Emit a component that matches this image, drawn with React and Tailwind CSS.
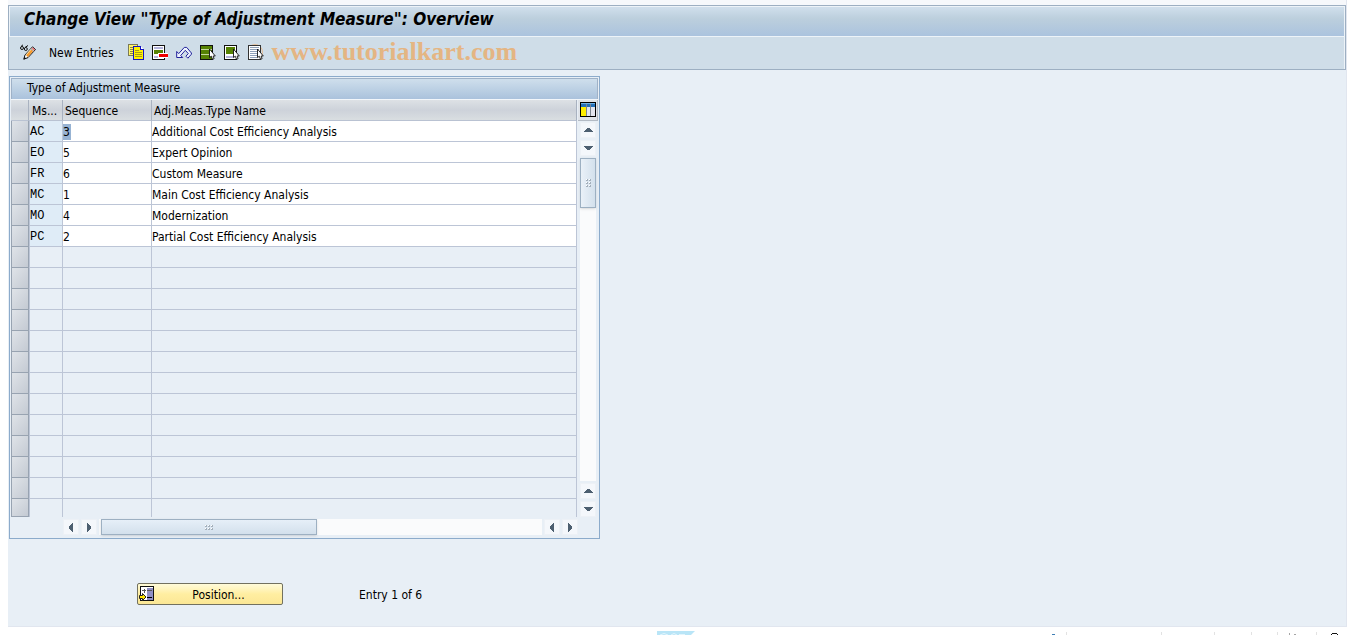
import clsx from "clsx";

const measures = [
  { code: "AC", sequence: "3", name: "Additional Cost Efficiency Analysis" },
  { code: "EO", sequence: "5", name: "Expert Opinion" },
  { code: "FR", sequence: "6", name: "Custom Measure" },
  { code: "MC", sequence: "1", name: "Main Cost Efficiency Analysis" },
  { code: "MO", sequence: "4", name: "Modernization" },
  { code: "PC", sequence: "2", name: "Partial Cost Efficiency Analysis" },
];

const VISIBLE_ROWS = 19;

function Icon({ children }) {
  return (
    <svg
      width="16"
      height="16"
      viewBox="0 0 16 16"
      shapeRendering="crispEdges"
      fill="none"
      aria-hidden="true"
    >
      {children}
    </svg>
  );
}

function DisplayChangeIcon() {
  return (
    <Icon>
      <g shapeRendering="auto">
        <circle cx="2" cy="4" r="1.5" stroke="#111" />
        <circle cx="5.8" cy="5" r="1.5" stroke="#111" />
        <path d="M1 2.5 3 .8M5 3.5 8 1.5" stroke="#111" />
        <path d="M3.8 15.2 5 11 12.5 2.8 15.5 5.5 8 13.6z" fill="#fff" stroke="#111" />
        <path d="M5.8 11 11.6 4.6l2.2 2-5.9 6.4z" fill="#f79a2c" />
        <path d="M6 10.8 11.8 4.6" stroke="#ffe9b0" />
        <path d="M11.8 4.2 12.7 3.4 15 5.5l-.9 1z" fill="#e8636a" />
        <path d="M11 4.8 13.6 7.2" stroke="#8faee0" />
        <path d="M3.6 15.4 4.4 12.8 6.2 14.5z" fill="#111" />
      </g>
    </Icon>
  );
}

function CopyIcon() {
  return (
    <Icon>
      <path d="M.5.5h9v11h-9z" fill="#fff36b" stroke="#7b7a55" />
      <path d="M2 3.5h6M2 5.5h3M2 7.5h3M2 9.5h3" stroke="#8d8a3c" />
      <path d="M5.5 2.5h7l3 3v10h-10z" fill="#fff100" stroke="#1515c0" />
      <path d="M12.5 2.5v3h3" fill="#fff" stroke="#1515c0" />
      <path d="M7 6.5h4M7 8.5h7M7 10.5h7M7 12.5h7" stroke="#a39a1e" />
    </Icon>
  );
}

function DeleteIcon() {
  return (
    <Icon>
      <path d="M.5 1.5h12v14H.5z" fill="#fff" stroke="#111" />
      <path d="M2 3h9v2H2zM2 12h9v2H2z" fill="#b4b4dc" />
      <path d="M2 6h9v4H2z" fill="#568203" />
      <path d="M6 9h10v5H6z" fill="#fff" />
      <path d="M7 10h9v3H7z" fill="#f00000" />
    </Icon>
  );
}

function UndoIcon() {
  return (
    <Icon>
      <path
        d="M.7 7.5v6h6l-2-2 4.6-5.2 3 3.3-2.4 2.6 2 2 3.5-4V9l-4.7-5.6H8.3L2.7 9.6z"
        fill="#eef4ff"
        stroke="#20209a"
        shapeRendering="auto"
      />
    </Icon>
  );
}

function Pointer() {
  return (
    <path
      d="M9.5 5v8.6l1.8-1.4 1.2 3.1 1.6-.6-1-2.7h2.2z"
      fill="#fff"
      stroke="#111"
      strokeWidth="0.9"
      shapeRendering="auto"
    />
  );
}

function SelectAllIcon() {
  return (
    <Icon>
      <path d="M.5 1.5h12v14H.5z" fill="#fff" stroke="#111" />
      <path d="M1 2h11v3H1zM1 6h11v4H1zM1 11h11v4H1z" fill="#568203" />
      <path d="M1 5.5h11M1 10.5h11" stroke="#c4d99a" />
      <Pointer />
    </Icon>
  );
}

function SelectBlockIcon() {
  return (
    <Icon>
      <path d="M.5 1.5h12v14H.5z" fill="#fff" stroke="#111" />
      <path d="M2 3h9v7H2z" fill="#568203" />
      <path d="M2 12h7v2H2z" fill="#b4b4dc" />
      <Pointer />
    </Icon>
  );
}

function DeselectAllIcon() {
  return (
    <Icon>
      <circle cx="7" cy="8" r="7.5" stroke="#e5bf9a" shapeRendering="auto" />
      <path d="M.5 1.5h12v14H.5z" fill="#fff" stroke="#333" />
      <path d="M2 3.5h9M2 5.5h9M2 7.5h7M2 9.5h7M2 11.5h7M2 13.5h7" stroke="#8fa0b8" />
      <Pointer />
    </Icon>
  );
}

function ColumnsIcon() {
  return (
    <Icon>
      <path d="M.5.5h15v14H.5z" fill="#fff" stroke="#000" />
      <path d="M1 1h14v4H1z" fill="#2470b8" />
      <path d="M1 1h14v1H1z" fill="#6fb0e4" />
      <path d="M1 5h5v9H1z" fill="#ffee00" />
      <path d="M7 5h3v9H7zM11 5h4v9h-4z" fill="#e3e5ee" />
      <path d="M6.5 2v12M10.5 2v12" stroke="#7c848f" />
    </Icon>
  );
}

function PositionIcon() {
  return (
    <Icon>
      <path d="M1.5.5h13v14h-13z" fill="#fff" stroke="#111" />
      <path d="M8 2h6v12H8z" fill="#8f8fc4" />
      <path d="M3 4.5h4M5.5 2.5v4M8 4.5h5" stroke="#555" />
      <path d="M8 11.5h5" stroke="#000" />
      <path
        d="M.5 9.5h3v-2l3.5 3.5-3.5 3.5v-2h-3z"
        fill="#ffe600"
        stroke="#222"
        shapeRendering="auto"
      />
    </Icon>
  );
}

const toolbarActions = [
  { label: "Copy As", Glyph: CopyIcon },
  { label: "Delete", Glyph: DeleteIcon },
  { label: "Undo Change", Glyph: UndoIcon },
  { label: "Select All", Glyph: SelectAllIcon },
  { label: "Select Block", Glyph: SelectBlockIcon },
  { label: "Deselect All", Glyph: DeselectAllIcon },
];

const arrowPaths = {
  up: "M3 9h9v-1h-1v-1h-1v-1h-1v-1h-3v1h-1v1h-1v1h-1z",
  down: "M3 5h9v1h-1v1h-1v1h-1v1h-3v-1h-1v-1h-1v-1h-1z",
  left: "M9 3v9h-1v-1h-1v-1h-1v-1h-1v-3h1v-1h1v-1h1v-1z",
  right: "M5 3v9h1v-1h1v-1h1v-1h1v-3h-1v-1h-1v-1h-1v-1z",
};

function ScrollArrow({ direction }) {
  return (
    <button
      type="button"
      aria-label={`Scroll ${direction}`}
      className="h-4 w-4 shrink-0 border border-[#edf1f6] bg-[#f4f7fb]"
    >
      <svg width="14" height="14" viewBox="0 0 14 14" shapeRendering="crispEdges">
        <path d={arrowPaths[direction]} fill="#4d5f70" />
      </svg>
    </button>
  );
}

function Grip({ vertical }) {
  return (
    <div className={clsx("grid gap-px", vertical ? "grid-cols-2" : "grid-cols-3")}>
      {[0, 1, 2, 3, 4, 5].map((dot) => (
        <span key={dot} className="h-[2px] w-[2px] border-r border-b border-[#a3afbb] bg-white" />
      ))}
    </div>
  );
}

function HeaderCell({ children, className, ...rest }) {
  return (
    <th
      scope="col"
      className={clsx(
        "border-r border-b border-[#a9b2c0] border-b-[#b9c2d2] bg-linear-to-b from-[#dde1e5] via-[#cdd2da] to-[#d9dee1] p-0 pt-px text-left font-normal whitespace-nowrap",
        className
      )}
      {...rest}
    >
      {children}
    </th>
  );
}

function MeasureRow({ measure, index }) {
  const filled = Boolean(measure);
  const last = index === VISIBLE_ROWS - 1;
  const line = last ? "border-r border-[#bcc5d6]" : "border-r border-b border-[#bcc5d6]";

  return (
    <tr className={last ? "h-[18px]" : "h-[21px]"}>
      <td className="p-0">
        <button
          type="button"
          aria-label={`Select row ${index + 1}`}
          className={clsx(
            "block w-full border border-t-0 border-[#98a3b1] bg-linear-to-br from-[#dfe3e8] to-[#c4cad3]",
            last ? "h-[18px]" : "h-[21px]"
          )}
        />
      </td>
      <td
        className={clsx(
          line,
          "border-l p-0 pt-[2px] font-['Liberation_Mono','DejaVu_Sans_Mono',monospace]",
          filled && "bg-[#dfecf7]"
        )}
      >
        {measure?.code}
      </td>
      <td className={clsx(line, "p-0 pt-px", filled && "bg-white")}>
        {filled && (
          <input
            aria-label={`Sequence for ${measure.code}`}
            defaultValue={measure.sequence}
            className={clsx(
              "block h-4 outline-none",
              index === 0 ? "w-2 bg-[#97b3d3]" : "w-full"
            )}
          />
        )}
      </td>
      <td className={clsx(line, "p-0 pt-px", filled && "bg-white")}>
        {filled && (
          <input
            aria-label={`Name for ${measure.code}`}
            defaultValue={measure.name}
            className="block h-4 w-full outline-none"
          />
        )}
      </td>
    </tr>
  );
}

function MeasureTable() {
  const rows = Array.from({ length: VISIBLE_ROWS }, (_, i) => measures[i]);

  return (
    <section className="w-[591px] max-w-full border border-[#8cabcb] p-px">
      <h2 className="h-[21px] border border-b-0 border-[#9fb2c8] bg-linear-to-b from-[#cfdfec] to-[#aac2dc] pl-[15px] text-xs leading-[18px]">
        Type of Adjustment Measure
      </h2>

      <div className="flex border-t border-[#f2f6fa]">
        <table className="min-w-0 flex-1 table-fixed border-separate border-spacing-0 text-xs leading-4">
          <colgroup>
            <col className="w-[18px]" />
            <col className="w-[34px]" />
            <col className="w-[89px]" />
            <col />
          </colgroup>
          <thead>
            <tr className="h-[21px]">
              <HeaderCell aria-label="Select" />
              <HeaderCell className="pl-[3px]">Ms...</HeaderCell>
              <HeaderCell className="pl-[2px]">Sequence</HeaderCell>
              <HeaderCell className="pl-[2px]">Adj.Meas.Type Name</HeaderCell>
            </tr>
          </thead>
          <tbody>
            {rows.map((measure, index) => (
              <MeasureRow key={index} measure={measure} index={index} />
            ))}
          </tbody>
        </table>

        <div className="ml-px flex w-5 flex-col items-center">
          <button
            type="button"
            aria-label="Table settings"
            className="flex h-[21px] w-full items-center justify-center border-r border-b border-[#b3bac4] bg-[#dfe3e8]"
          >
            <ColumnsIcon />
          </button>
          <div className="mt-px flex flex-1 flex-col gap-[2px]">
            <ScrollArrow direction="up" />
            <ScrollArrow direction="down" />
            <div className="flex-1 bg-[#fafbfc]">
              <div className="flex h-[50px] items-center justify-center border border-[#9db0c2] bg-linear-to-r from-[#eaf1f8] to-[#d3e0ec] shadow-sm">
                <Grip vertical />
              </div>
            </div>
            <ScrollArrow direction="up" />
            <ScrollArrow direction="down" />
          </div>
        </div>
      </div>

      <div className="mt-[2px] mr-[20px] mb-[2px] ml-[52px] flex gap-[2px]">
        <ScrollArrow direction="left" />
        <ScrollArrow direction="right" />
        <div className="flex-1 bg-[#fafbfc] pl-[2px]">
          <div className="flex h-4 w-[49%] items-center justify-center border border-[#9db0c2] bg-linear-to-b from-[#e6eff8] to-[#d3e0ec] shadow-sm">
            <Grip />
          </div>
        </div>
        <ScrollArrow direction="left" />
        <ScrollArrow direction="right" />
      </div>
    </section>
  );
}

export default function App() {
  return (
    <div className="flex min-h-screen flex-col bg-white font-['DejaVu_Sans_Condensed','DejaVu_Sans',sans-serif] text-black">
      <div className="mr-[10px] ml-2 flex flex-1 flex-col border-r border-b border-[#e1e6ef] bg-[#e8eff6]">
        <header className="border-t-[5px] border-[#f6f8fb]">
          <div className="border border-[#9dafc2]">
            <h1 className="h-[31px] border border-[#edf3f8] bg-linear-to-b from-[#d0dfec] via-[#bccfdd] via-40% to-[#abc3de] pl-[14px] text-[17px] leading-6 font-bold italic">
              Change View "Type of Adjustment Measure": Overview
            </h1>
            <div className="flex h-8 items-center border-r border-[#edf3f8] bg-[#cfdde8] pb-[2px] pl-[11px] text-xs">
              <button type="button" aria-label="Display/Change">
                <DisplayChangeIcon />
              </button>
              <button type="button" className="ml-[13px] pt-px whitespace-nowrap">
                New Entries
              </button>
              <div className="ml-[14px] flex gap-2">
                {toolbarActions.map(({ label, Glyph }) => (
                  <button key={label} type="button" aria-label={label}>
                    <Glyph />
                  </button>
                ))}
              </div>
              <span className="ml-2 font-['Liberation_Serif',serif] text-[26px] leading-8 font-bold text-[#e4b583]">
                www.tutorialkart.com
              </span>
            </div>
          </div>
        </header>

        <main className="pt-[6px] pl-px">
          <MeasureTable />
          <div className="mt-11 ml-32 flex items-center gap-19 text-xs">
            <button
              type="button"
              className="flex h-[22px] w-[146px] items-center rounded-xs border border-[#72715f] bg-linear-to-b from-[#fffbd9] via-[#ffeea1] to-[#fbe795] pl-px"
            >
              <PositionIcon />
              <span className="flex-1 pt-px">Position...</span>
            </button>
            <span className="pt-px">Entry 1 of 6</span>
          </div>
        </main>
      </div>

      <footer className="flex h-2 items-end justify-between pr-[17px] pl-[657px]">
        <svg width="40" height="4" viewBox="0 0 40 4" aria-hidden="true">
          <path d="M0 0h38l-4 4H0z" fill="#b9e5f7" />
          <path d="M3 4q4-3 8 0M14 4q3-3 6 0M22 3.5h6" stroke="#e3f5fc" fill="none" />
        </svg>
        <svg width="290" height="4" viewBox="0 0 290 4" shapeRendering="crispEdges" aria-hidden="true">
          <path d="M2 3h3v1H2z" fill="#3f7fb5" />
          <path d="M16 1h1v3h-1zM111 1h1v3h-1zM164 1h1v3h-1zM201 1h1v3h-1zM227 1h1v3h-1zM266 1h1v3h-1z" fill="#e2e2e2" />
          <path d="M239 2h1v2h-1zM244 3h2v1h-2z" fill="#a5a5a5" />
          <path d="M282 2h5v1h-5zM281 3h1v1h-1zM287 3h1v1h-1z" fill="#111" />
        </svg>
      </footer>
    </div>
  );
}
